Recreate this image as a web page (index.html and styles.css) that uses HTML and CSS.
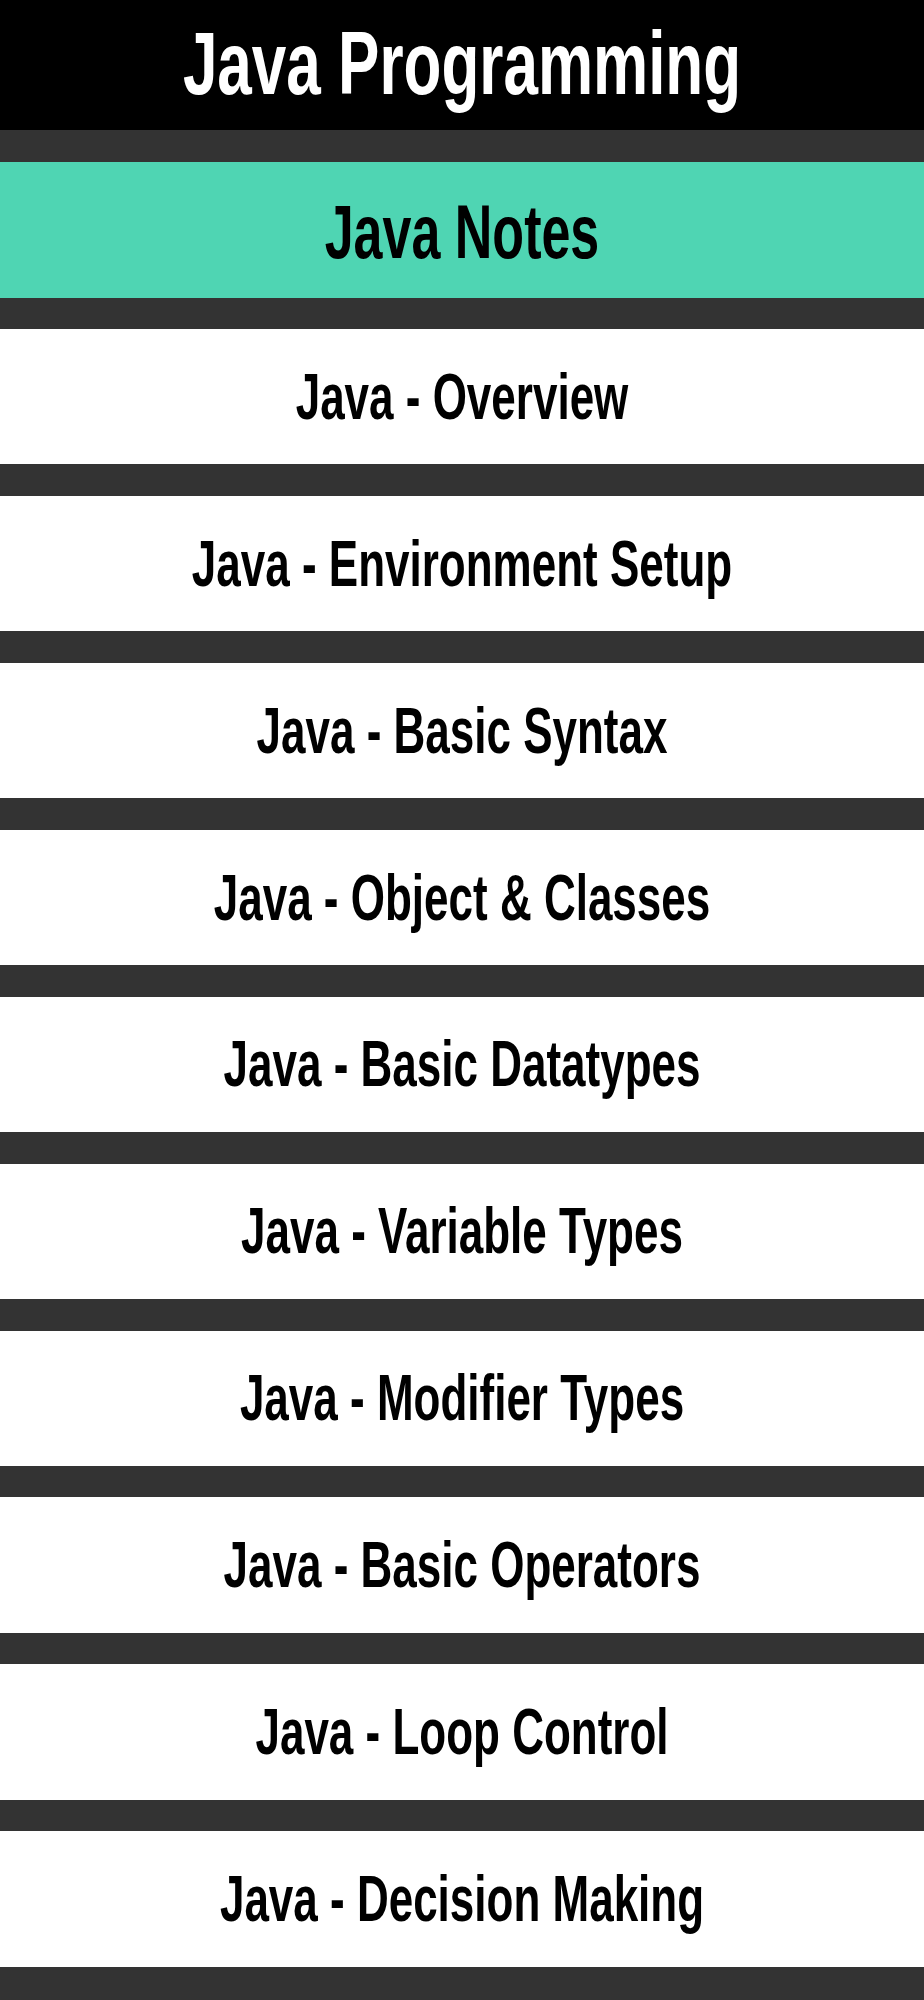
FILE: index.html
```html
<!DOCTYPE html>
<html lang="en">
<head>
<meta charset="utf-8">
<title>Java Programming</title>
<link rel="stylesheet" href="styles.css">
</head>
<body>
  <header class="app-bar">
    <h1 class="app-title"><span class="stretch">Java Programming</span></h1>
  </header>
  <nav class="menu">
    <div class="menu-item menu-item--active"><span class="stretch">Java Notes</span></div>
    <div class="menu-item"><span class="stretch">Java - Overview</span></div>
    <div class="menu-item"><span class="stretch">Java - Environment Setup</span></div>
    <div class="menu-item"><span class="stretch">Java - Basic Syntax</span></div>
    <div class="menu-item"><span class="stretch">Java - Object &amp; Classes</span></div>
    <div class="menu-item"><span class="stretch">Java - Basic Datatypes</span></div>
    <div class="menu-item"><span class="stretch">Java - Variable Types</span></div>
    <div class="menu-item"><span class="stretch">Java - Modifier Types</span></div>
    <div class="menu-item"><span class="stretch">Java - Basic Operators</span></div>
    <div class="menu-item"><span class="stretch">Java - Loop Control</span></div>
    <div class="menu-item"><span class="stretch">Java - Decision Making</span></div>
  </nav>
</body>
</html>
```
FILE: styles.css
```css
html, body {
  margin: 0;
  padding: 0;
}

body {
  background: #333333;
  font-family: "Liberation Sans", Arial, sans-serif;
  font-weight: bold;
  min-height: 2000px;
}

.app-bar {
  height: 130px;
  background: #000000;
  display: flex;
  align-items: center;
  justify-content: center;
  padding-bottom: 3px;
  box-sizing: border-box;
}

.app-title {
  margin: 0;
  font-size: 62px;
  font-weight: bold;
  color: #ffffff;
  line-height: 1;
}

.stretch {
  display: inline-block;
  white-space: nowrap;
  transform: scaleY(1.46);
}

.app-title .stretch {
  transform: scaleY(1.42);
}

.menu {
  display: flex;
  flex-direction: column;
  gap: 31.6px;
  padding-top: 32.3px;
}

.menu-item {
  height: 135.3px;
  background: #ffffff;
  color: #000000;
  display: flex;
  align-items: center;
  justify-content: center;
  font-size: 44px;
  line-height: 1;
}

.menu-item .stretch {
  transform: scaleY(1.49);
}

.menu-item--active {
  background: #4fd5b3;
  font-size: 52px;
  padding-top: 4px;
  box-sizing: border-box;
}

.menu-item--active .stretch {
  transform: scaleY(1.46);
}
```
